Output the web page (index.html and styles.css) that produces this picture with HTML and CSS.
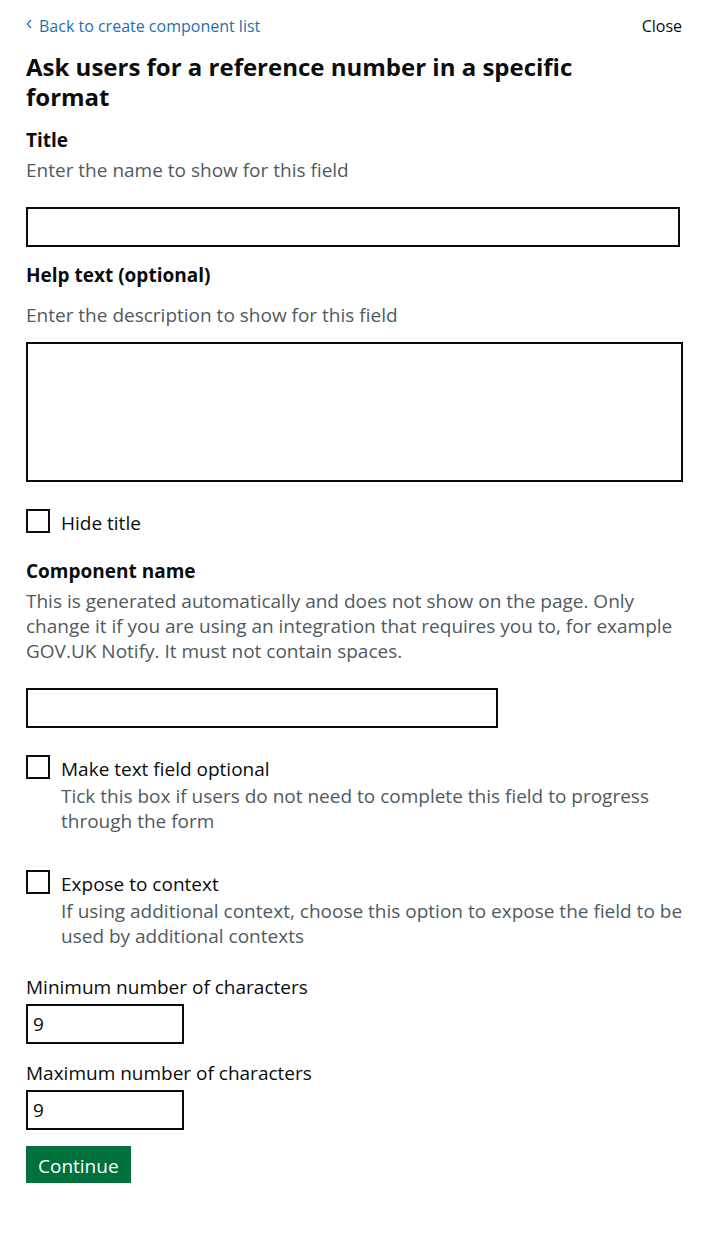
FILE: index.html
```html
<!DOCTYPE html>
<html lang="en">
<head>
<meta charset="utf-8">
<title>Ask users for a reference number</title>
<link rel="stylesheet" href="styles.css">
</head>
<body>
<div class="page">
  <div class="topbar">
    <a class="back" href="#"><svg class="caret" width="6" height="10" viewBox="0 0 6 10"><path d="M5 1 L1.2 5 L5 9" fill="none" stroke="#1d70b8" stroke-width="1.2"/></svg>Back to create component list</a>
    <a class="close" href="#">Close</a>
  </div>
  <h1 class="heading">Ask users for a reference number in a specific format</h1>

  <div class="label title-label">Title</div>
  <div class="hint title-hint">Enter the name to show for this field</div>
  <div class="input full"></div>

  <div class="label help-label">Help text (optional)</div>
  <div class="hint help-hint">Enter the description to show for this field</div>
  <div class="textarea"></div>

  <div class="check hide-check">
    <span class="box"></span>
    <div class="check-text"><div class="check-label">Hide title</div></div>
  </div>

  <div class="label comp-label">Component name</div>
  <div class="hint comp-hint">This is generated automatically and does not show on the page. Only change it if you are using an integration that requires you to, for example GOV.UK Notify. It must not contain spaces.</div>
  <div class="input medium"></div>

  <div class="check opt-check">
    <span class="box"></span>
    <div class="check-text">
      <div class="check-label">Make text field optional</div>
      <div class="check-hint">Tick this box if users do not need to complete this field to progress through the form</div>
    </div>
  </div>

  <div class="check ctx-check">
    <span class="box"></span>
    <div class="check-text">
      <div class="check-label">Expose to context</div>
      <div class="check-hint">If using additional context, choose this option to expose the field to be used by additional contexts</div>
    </div>
  </div>

  <div class="num-label min-label">Minimum number of characters</div>
  <div class="input small"><span class="value">9</span></div>
  <div class="num-label max-label">Maximum number of characters</div>
  <div class="input small"><span class="value">9</span></div>

  <button class="button">Continue</button>
</div>
</body>
</html>
```

FILE: styles.css
```css
* { box-sizing: border-box; }
html, body { margin: 0; padding: 0; background: #fff; }
body { font-family: "Open Sans", sans-serif; color: #0b0c0c; }
.page { display: flex; flex-direction: column; align-items: flex-start; padding: 14px 26px 0 26px; }

.topbar { align-self: stretch; display: flex; justify-content: space-between; align-items: center; height: 24px; font-size: 16px; line-height: 24px; }
.back { color: #1d70b8; text-decoration: none; display: flex; align-items: center; }
.caret { margin-right: 7px; margin-top: -4px; }
.close { color: #0b0c0c; text-decoration: none; margin-right: 2px; }

.heading { font-size: 24px; line-height: 30px; font-weight: 700; margin: 14px 0 0; max-width: 560px; }

.label { font-size: 19px; font-weight: 700; line-height: 25px; }
.hint { font-size: 19px; line-height: 25px; color: #505a5f; }
.title-label { margin-top: 16px; }
.title-hint { margin-top: 5px; }
.help-label { margin-top: 16px; }
.help-hint { margin-top: 15px; }
.comp-label { margin-top: 23px; }
.comp-hint { margin-top: 5px; }

.input { border: 2px solid #0b0c0c; height: 40px; display: flex; align-items: center; padding-left: 5px; }
.full { width: 654px; margin-top: 24px; }
.medium { width: 472px; margin-top: 24px; }
.small { width: 158px; margin-top: 4px; }
.textarea { border: 2px solid #0b0c0c; height: 140px; width: 657px; margin-top: 14px; }

.check { display: flex; align-items: flex-start; }
.box { width: 24px; height: 24px; border: 2px solid #0b0c0c; flex: none; }
.check-text { margin-left: 11px; margin-top: 2px; }
.check-label { font-size: 19px; line-height: 25px; }
.check-hint { font-size: 19px; line-height: 24.5px; color: #505a5f; margin-top: 2px; }
.hide-check { margin-top: 27px; }
.opt-check { margin-top: 27px; }
.ctx-check { margin-top: 37px; }

.num-label { font-size: 19px; line-height: 25px; }
.min-label { margin-top: 27px; }
.max-label { margin-top: 17px; }
.value { font-size: 19px; }

.button { margin-top: 16px; background: #00703c; color: #fff; border: 0; border-radius: 0; font-family: "Open Sans", sans-serif; font-size: 19px; line-height: 25px; height: 37px; padding: 4px 12px 0; box-shadow: 0 2px 0 #002d18; }
```
